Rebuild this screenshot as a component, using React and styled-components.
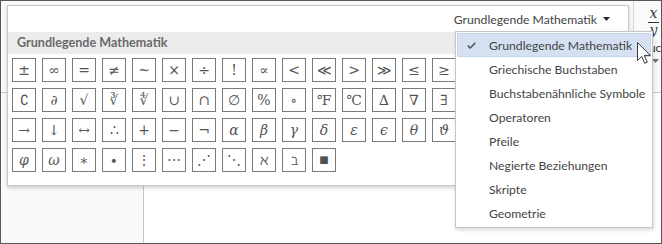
import styled, { createGlobalStyle } from "styled-components";

const GlobalStyle = createGlobalStyle`
  html, body { margin: 0; padding: 0; background: #fff; }
  body { font-family: "Segoe UI", "Lato", "Noto Sans", sans-serif; }
`;

// only the columns that are not hidden by the open menu
const rows = [
  ["±", "∞", "=", "≠", "~", "×", "÷", "!", "∝", "<", "≪", ">", "≫", "≤", "≥"],
  ["∁", "∂", "√", "∛", "∜", "∪", "∩", "∅", "%", "∘", "℉", "℃", "∆", "∇", "∃"],
  ["→", "↓", "↔", "∴", "+", "−", "¬", "α", "β", "γ", "δ", "ε", "ϵ", "θ", "ϑ"],
  ["φ", "ω", "∗", "∙", "⋮", "⋯", "⋰", "⋱", "ℵ", "ℶ", "■"],
];

const italic = new Set(["α", "β", "γ", "δ", "ε", "ϵ", "θ", "ϑ", "φ", "ω"]);

const categories = [
  "Grundlegende Mathematik",
  "Griechische Buchstaben",
  "Buchstabenähnliche Symbole",
  "Operatoren",
  "Pfeile",
  "Negierte Beziehungen",
  "Skripte",
  "Geometrie",
];

const Arrow = () => (
  <svg width="7" height="4" viewBox="0 0 7 4">
    <path d="M0 0h7L3.5 4z" fill="#2b2b2b" />
  </svg>
);

const Check = () => (
  <svg width="9" height="7" viewBox="0 0 9 7">
    <path d="M0.8 3.6l2.4 2.4L8.3 0.9" fill="none" stroke="#555" strokeWidth="1.5" />
  </svg>
);

const Pointer = () => (
  <svg width="14" height="23" viewBox="0 0 14 23">
    <path
      d="M0.5 0.5v18l4.2-4.1 3 6.9 2.6-1.1-3-6.8h6z"
      fill="#fff"
      stroke="#3a3a3a"
      strokeWidth="1"
      strokeLinejoin="round"
    />
  </svg>
);

export default function App() {
  return (
    <>
      <GlobalStyle />
      <Frame>
        <Ribbon>
          <RibbonGroup>
            <Fraction>
              <Numerator>x</Numerator>
              <Denominator>y</Denominator>
            </Fraction>
            <RibbonLabel>Bruch</RibbonLabel>
            <RibbonCaret>
              <Arrow />
            </RibbonCaret>
          </RibbonGroup>
        </Ribbon>
        <DocArea>
          <NavStrip />
          <Page />
        </DocArea>

        <Gallery>
          <TopBar>
            <Trigger>
              Grundlegende Mathematik
              <Arrow />
            </Trigger>
          </TopBar>
          <Header>Grundlegende Mathematik</Header>
          <Symbols>
            {rows.map((row, r) => (
              <SymbolRow key={r}>
                {row.map((s, i) => (
                  <Cell key={i} $italic={italic.has(s)} $square={s === "■"}>
                    {s}
                  </Cell>
                ))}
              </SymbolRow>
            ))}
          </Symbols>
        </Gallery>

        <Menu>
          {categories.map((c, i) => (
            <MenuItem key={c} $active={i === 0}>
              <CheckBox>{i === 0 && <Check />}</CheckBox>
              {c}
            </MenuItem>
          ))}
        </Menu>

        <Cursor>
          <Pointer />
        </Cursor>
      </Frame>
    </>
  );
}

const Frame = styled.div`
  position: relative;
  width: 662px;
  height: 244px;
  box-sizing: border-box;
  border: 1px solid #5e5555;
  display: flex;
  flex-direction: column;
  overflow: hidden;
  background: #fff;
`;

const Ribbon = styled.div`
  height: 91px;
  flex-shrink: 0;
  background: #fbfbfb;
  border-bottom: 1px solid #cfcfcf;
  display: flex;
  justify-content: flex-end;
`;

const RibbonGroup = styled.div`
  width: 27px;
  border-left: 1px solid #d4d4d4;
  display: flex;
  flex-direction: column;
  align-items: center;
  padding-top: 5px;
`;

const Fraction = styled.div`
  display: flex;
  flex-direction: column;
  align-items: center;
  margin-left: 12px;
  font-family: "DejaVu Serif", serif;
  font-style: italic;
  font-size: 14px;
  color: #333;
`;

const Numerator = styled.span`
  line-height: 15px;
  padding: 0 2px 1px;
  border-bottom: 1px solid #333;
`;

const Denominator = styled.span`
  line-height: 15px;
`;

const RibbonLabel = styled.div`
  margin-top: 2px;
  margin-left: 10px;
  font-size: 12px;
  color: #333;
  white-space: nowrap;
`;

const RibbonCaret = styled.div`
  margin-left: 16px;
  margin-top: 2px;
  line-height: 0;

  svg path {
    fill: #777;
  }
`;

const DocArea = styled.div`
  flex: 1;
  display: flex;
`;

const NavStrip = styled.div`
  width: 142px;
  background: #fafafa;
  border-right: 1px solid #c6c6c6;
`;

const Page = styled.div`
  flex: 1;
  background: #fff;
`;

const Gallery = styled.div`
  position: absolute;
  left: 6px;
  top: 4px;
  width: 622px;
  height: 181px;
  box-sizing: border-box;
  background: #fff;
  border: 1px solid #c9c9c9;
  box-shadow: 0 2px 4px rgba(0, 0, 0, 0.18);
`;

const TopBar = styled.div`
  height: 26px;
  display: flex;
  justify-content: flex-end;
  align-items: center;
  padding-right: 18px;
`;

const Trigger = styled.div`
  display: flex;
  align-items: center;
  gap: 6px;
  font-size: 12.2px;
  color: #444;
`;

const Header = styled.div`
  height: 22px;
  line-height: 22px;
  background: #ececec;
  padding-left: 9px;
  font-size: 12.6px;
  font-weight: 700;
  color: #6a6a6a;
`;

const Symbols = styled.div`
  display: flex;
  flex-direction: column;
  gap: 6px;
  padding: 4px 0 0 4px;
`;

const SymbolRow = styled.div`
  display: flex;
  gap: 6px;
`;

const Cell = styled.div`
  width: 24px;
  height: 24px;
  box-sizing: border-box;
  border: 1px solid #7a7a7a;
  display: flex;
  align-items: center;
  justify-content: center;
  font-family: "DejaVu Serif", serif;
  font-style: ${(p) => (p.$italic ? "italic" : "normal")};
  font-size: ${(p) => (p.$square ? "10px" : "14px")};
  color: ${(p) => (p.$square ? "#505050" : "#555")};
  line-height: 1;
`;

const Menu = styled.div`
  position: absolute;
  left: 454px;
  top: 30px;
  width: 198px;
  box-sizing: border-box;
  background: #fff;
  border: 1px solid #c6c6c6;
  box-shadow: 1px 2px 4px rgba(0, 0, 0, 0.15);
  padding: 1px 1px 2px;
`;

const MenuItem = styled.div`
  height: 24px;
  box-sizing: border-box;
  display: flex;
  align-items: center;
  font-size: 12.2px;
  color: #444;
  white-space: nowrap;
  background: ${(p) => (p.$active ? "#d5e1f2" : "transparent")};
  border: 1px solid ${(p) => (p.$active ? "#c5d5ec" : "transparent")};
`;

const CheckBox = styled.div`
  width: 31px;
  display: flex;
  padding-left: 9px;
  box-sizing: border-box;
  line-height: 0;
`;

const Cursor = styled.div`
  position: absolute;
  left: 636px;
  top: 41px;
  line-height: 0;
`;
